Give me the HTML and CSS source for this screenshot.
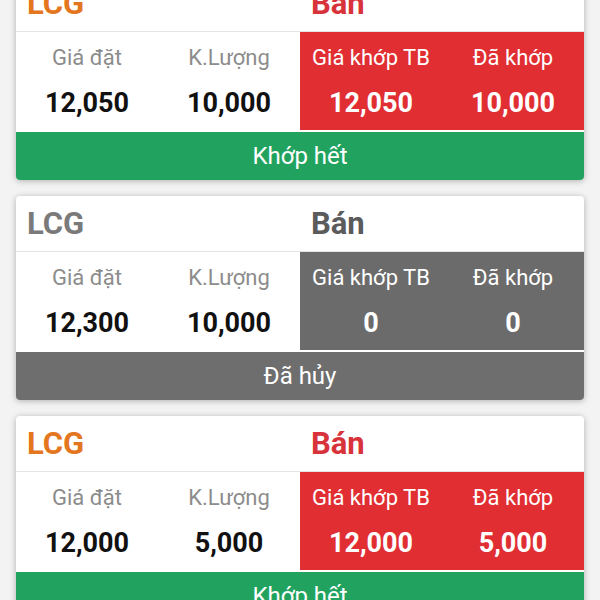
FILE: index.html
```html
<!DOCTYPE html>
<html lang="vi">
<head>
<meta charset="utf-8">
<title>Sổ lệnh</title>
<link rel="stylesheet" href="styles.css">
</head>
<body>
<div class="list">
  <div class="card matched">
    <div class="head">
      <div class="sym">LCG</div>
      <div class="side">Bán</div>
    </div>
    <div class="stats">
      <div class="half plain">
        <div class="cell"><div class="lbl">Giá đặt</div><div class="val">12,050</div></div>
        <div class="cell"><div class="lbl">K.Lượng</div><div class="val">10,000</div></div>
      </div>
      <div class="half fill">
        <div class="cell"><div class="lbl">Giá khớp TB</div><div class="val">12,050</div></div>
        <div class="cell"><div class="lbl">Đã khớp</div><div class="val">10,000</div></div>
      </div>
    </div>
    <div class="foot">Khớp hết</div>
  </div>

  <div class="card cancelled">
    <div class="head">
      <div class="sym">LCG</div>
      <div class="side">Bán</div>
    </div>
    <div class="stats">
      <div class="half plain">
        <div class="cell"><div class="lbl">Giá đặt</div><div class="val">12,300</div></div>
        <div class="cell"><div class="lbl">K.Lượng</div><div class="val">10,000</div></div>
      </div>
      <div class="half fill">
        <div class="cell"><div class="lbl">Giá khớp TB</div><div class="val">0</div></div>
        <div class="cell"><div class="lbl">Đã khớp</div><div class="val">0</div></div>
      </div>
    </div>
    <div class="foot">Đã hủy</div>
  </div>

  <div class="card matched">
    <div class="head">
      <div class="sym">LCG</div>
      <div class="side">Bán</div>
    </div>
    <div class="stats">
      <div class="half plain">
        <div class="cell"><div class="lbl">Giá đặt</div><div class="val">12,000</div></div>
        <div class="cell"><div class="lbl">K.Lượng</div><div class="val">5,000</div></div>
      </div>
      <div class="half fill">
        <div class="cell"><div class="lbl">Giá khớp TB</div><div class="val">12,000</div></div>
        <div class="cell"><div class="lbl">Đã khớp</div><div class="val">5,000</div></div>
      </div>
    </div>
    <div class="foot">Khớp hết</div>
  </div>
</div>
</body>
</html>
```
FILE: styles.css
```css
* { box-sizing: border-box; }
html, body { margin: 0; padding: 0; }
body {
  background: #f3f3f3;
  font-family: Roboto, "Liberation Sans", "DejaVu Sans", sans-serif;
  width: 600px;
  height: 600px;
  overflow: hidden;
}
.list {
  display: flex;
  flex-direction: column;
  gap: 16px;
  padding: 0 16px;
  margin-top: -24px;
}
.card {
  background: #fff;
  border-radius: 4px;
  box-shadow: 0 1px 6px rgba(0, 0, 0, 0.28);
  overflow: hidden;
  display: flex;
  flex-direction: column;
}
.head {
  display: grid;
  grid-template-columns: 1fr 1fr;
  height: 56px;
  border-bottom: 1px solid #e4e4e4;
  align-items: center;
  font-size: 31px;
  font-weight: 700;
}
.sym { padding-left: 11px; }
.side { padding-left: 11px; }
.matched .sym { color: #e3761e; }
.matched .side { color: #d8333a; }
.cancelled .sym { color: #7a7a7a; }
.cancelled .side { color: #5b5b5b; }

.stats {
  display: grid;
  grid-template-columns: 1fr 1fr;
  height: 98px;
}
.half {
  display: grid;
  grid-template-columns: 1fr 1fr;
}
.cell {
  display: flex;
  flex-direction: column;
  align-items: center;
  padding-top: 14px;
}
.lbl {
  font-size: 22px;
  line-height: 24px;
}
.val {
  font-size: 27px;
  font-weight: 700;
  line-height: 32px;
  margin-top: 17px;
}
.plain .lbl { color: #8c8c8c; }
.plain .val { color: #111; }
.fill .lbl, .fill .val { color: #fff; }
.matched .fill { background: #e02e33; }
.cancelled .fill { background: #6b6b6b; }

.foot {
  margin-top: 2px;
  height: 48px;
  display: flex;
  align-items: center;
  justify-content: center;
  color: #fff;
  font-size: 24px;
}
.matched .foot { background: #21a35f; }
.cancelled .foot { background: #6e6e6e; }
```
